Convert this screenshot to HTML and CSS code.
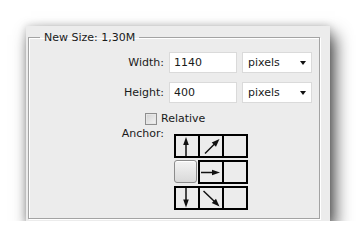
FILE: index.html
```html
<!DOCTYPE html>
<html lang="en">
<head>
  <meta charset="UTF-8">
  <title>Image Size</title>
  <link rel="stylesheet" href="styles.css">
</head>
<body>
  <div class="dialog">
    <fieldset class="group">
      <legend>New Size: 1,30M</legend>

      <div class="rows">
        <label class="label" for="widthInput">Width:</label>
        <div class="controls">
          <input class="field" type="text" id="widthInput" value="1140">
          <div class="select"><span>pixels</span><span class="caret"></span></div>
        </div>

        <label class="label" for="heightInput">Height:</label>
        <div class="controls">
          <input class="field" type="text" id="heightInput" value="400">
          <div class="select"><span>pixels</span><span class="caret"></span></div>
        </div>

        <div class="check-row">
          <span class="checkbox"></span>
          <span>Relative</span>
        </div>

        <div class="label anchor-label">Anchor:</div>
        <div class="anchor">
          <div class="anchor-row">
            <div class="cell">
              <svg viewBox="0 0 20 20" width="20" height="20"><line x1="10" y1="20" x2="10" y2="7"/><polygon points="10,1 7.2,9 12.8,9"/></svg>
            </div>
            <div class="cell">
              <svg viewBox="0 0 20 20" width="20" height="20"><line x1="5" y1="17.5" x2="15" y2="7.5"/><polygon points="19.5,3 15.97,10.77 11.73,6.53"/></svg>
            </div>
            <div class="cell"></div>
          </div>
          <div class="anchor-row">
            <div class="cell current"></div>
            <div class="cell">
              <svg viewBox="0 0 20 20" width="20" height="20"><line x1="1" y1="10.5" x2="14" y2="10.5"/><polygon points="20,10.5 12,7.7 12,13.3"/></svg>
            </div>
            <div class="cell"></div>
          </div>
          <div class="anchor-row">
            <div class="cell">
              <svg viewBox="0 0 20 20" width="20" height="20"><line x1="10" y1="0" x2="10" y2="13"/><polygon points="10,19.5 7.2,11.5 12.8,11.5"/></svg>
            </div>
            <div class="cell">
              <svg viewBox="0 0 20 20" width="20" height="20"><line x1="3.5" y1="3" x2="14.5" y2="13.5"/><polygon points="19.5,18.5 15.97,10.73 11.73,14.97"/></svg>
            </div>
            <div class="cell"></div>
          </div>
        </div>
      </div>
    </fieldset>
  </div>
</body>
</html>
```

FILE: styles.css
```css
body {
  margin: 0;
  padding: 26px 0 0 26px;
  background-color: #fff;
  font-family: 'DejaVu Sans', Verdana, sans-serif;
  font-size: 11px;
  color: #1a1a1a;
}

.dialog {
  width: 304px;
  height: 195px;
  box-sizing: border-box;
  padding: 4px 10px 3px 2px;
  background-color: #ececec;
  box-shadow: 5px 9px 16px rgba(0, 0, 0, 0.7), 0 0 8px rgba(0, 0, 0, 0.18);
}

.group {
  margin: 0;
  padding: 7px 0 8px 0;
  border: 1px solid #a3a3a3;
  box-shadow: 1px 1px 0 #fff, inset 1px 1px 0 #fff;
  min-inline-size: 0;
}

.group legend {
  margin-left: 11px;
  padding: 0 4px;
  line-height: 15px;
}

.rows {
  display: grid;
  grid-template-columns: 135px auto;
  column-gap: 5px;
  row-gap: 9px;
}

.label {
  text-align: right;
  align-self: center;
}

.controls {
  display: flex;
  gap: 5px;
}

.field {
  width: 68px;
  height: 21px;
  box-sizing: border-box;
  margin: 0;
  padding: 0 4px;
  border: 1px solid #dadada;
  background-color: #fff;
  font: inherit;
  color: inherit;
}

.select {
  width: 70px;
  height: 21px;
  box-sizing: border-box;
  padding: 0 4px 0 5px;
  border: 1px solid #dadada;
  background-color: #fff;
  display: flex;
  align-items: center;
  justify-content: space-between;
}

.caret {
  width: 0;
  height: 0;
  margin-right: 1px;
  border-left: 3.5px solid transparent;
  border-right: 3.5px solid transparent;
  border-top: 4px solid #111;
}

.check-row {
  grid-column: 1 / -1;
  display: flex;
  align-items: center;
  gap: 4px;
  height: 13px;
  padding-left: 116px;
}

.checkbox {
  width: 12px;
  height: 12px;
  box-sizing: border-box;
  border: 1px solid #8e8e8e;
  background: linear-gradient(135deg, #d2d2d2, #f4f4f4);
  box-shadow: inset 0 0 0 1px #e6e6e6;
}

.anchor-label {
  align-self: start;
  margin-top: -7px;
}

.anchor {
  display: flex;
  flex-direction: column;
  gap: 2px;
  margin-left: 5px;
}

.anchor-row {
  display: flex;
}

.cell {
  width: 24px;
  height: 24px;
  box-sizing: border-box;
  border: 2px solid #000;
  border-right: none;
  background-color: #ececec;
}

.cell:last-child {
  width: 26px;
  border-right: 2px solid #000;
}

.cell svg {
  display: block;
}

.cell line {
  stroke: #111;
  stroke-width: 1.5;
}

.cell polygon {
  fill: #111;
}

.cell.current {
  width: 23px;
  height: 23px;
  margin-right: 1px;
  border: 1px solid #8c8c8c;
  border-radius: 3px;
  background: linear-gradient(#f3f3f3, #d9d9d9);
  box-shadow: inset 0 1px 0 #fff;
}
```
